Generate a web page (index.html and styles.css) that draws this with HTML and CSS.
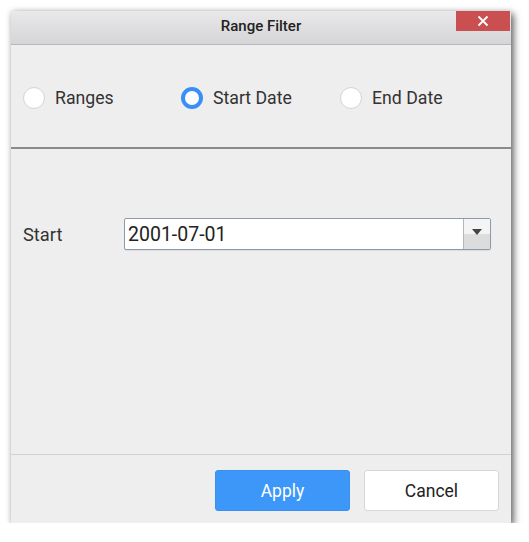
FILE: index.html
```html
<!DOCTYPE html>
<html>
<head>
<meta charset="utf-8">
<link rel="stylesheet" href="styles.css">
</head>
<body>
<div class="dialog">
  <div class="titlebar">
    <span class="title">Range Filter</span>
    <button class="close" aria-label="Close">
      <svg width="12" height="12" viewBox="0 0 12 12"><path d="M1.5 1.5 L10.5 10.5 M10.5 1.5 L1.5 10.5" stroke="#fff" stroke-width="1.8" fill="none"/></svg>
    </button>
  </div>
  <div class="radios">
    <label class="radio r1"><span class="dot"></span><span>Ranges</span></label>
    <label class="radio r2"><span class="dot checked"></span><span>Start Date</span></label>
    <label class="radio r3"><span class="dot"></span><span>End Date</span></label>
  </div>
  <div class="content">
    <div class="row">
      <span class="label">Start</span>
      <div class="select">
        <span class="value">2001-07-01</span>
        <span class="arrow"><svg width="10" height="6" viewBox="0 0 10 6"><path d="M0 0 H10 L5 6 Z" fill="#444"/></svg></span>
      </div>
    </div>
  </div>
  <div class="footer">
    <button class="btn apply">Apply</button>
    <button class="btn cancel">Cancel</button>
  </div>
</div>
</body>
</html>
```
FILE: styles.css
```css
html, body {
  margin: 0;
  padding: 0;
  background: #fff;
}
body {
  padding: 11px 0 0 11px;
  font-family: Roboto, "Liberation Sans", sans-serif;
  color: #333;
}
.dialog {
  width: 500px;
  height: 512px;
  background: #eeeeee;
  display: flex;
  flex-direction: column;
  box-shadow: 3px 3px 7px rgba(0,0,0,0.55), 0 0 6px rgba(0,0,0,0.15);
}
.titlebar {
  position: relative;
  height: 34px;
  box-sizing: border-box;
  border-bottom: 1px solid #b8b8b8;
  background: linear-gradient(#e9e8ea, #d5d4d6);
  display: flex;
  align-items: center;
  justify-content: center;
}
.title {
  font-size: 15px;
  font-weight: 500;
  color: #222;
  margin-top: -3px;
}
.close {
  position: absolute;
  top: 0;
  right: 1px;
  width: 54px;
  height: 20px;
  border: none;
  padding: 0;
  background: #c94f50;
  display: flex;
  align-items: center;
  justify-content: center;
}
.radios {
  height: 104px;
  box-sizing: border-box;
  border-bottom: 2px solid #8a8a8a;
  display: flex;
  align-items: center;
  padding-left: 12px;
  padding-top: 4px;
}
.radio {
  display: flex;
  align-items: center;
  font-size: 17.7px;
  color: #333;
}
.r1 { width: 158px; }
.r2 { width: 159px; }
.dot {
  width: 22px;
  height: 22px;
  box-sizing: border-box;
  border-radius: 50%;
  background: #fff;
  border: 1px solid #d4d4d4;
  margin-right: 10px;
}
.dot.checked {
  border: 4px solid #3a8ef6;
}
.content {
  flex: 1;
  border-bottom: 1px solid #d2d2d2;
  padding: 69px 0 0 12px;
}
.row {
  display: flex;
  align-items: center;
}
.label {
  width: 101px;
  font-size: 18.3px;
  color: #333;
}
.select {
  width: 367px;
  height: 32px;
  box-sizing: border-box;
  border: 1px solid #8d9aab;
  border-radius: 2px;
  background: #fff;
  display: flex;
  align-items: center;
  box-shadow: 0 1px 1px rgba(0,0,0,0.08);
}
.value {
  flex: 1;
  padding-left: 3px;
  font-size: 19.5px;
  color: #222;
}
.arrow {
  width: 27px;
  height: 100%;
  box-sizing: border-box;
  border-left: 1px solid #b3b7bd;
  background: linear-gradient(#f4f4f4 0%, #f4f4f4 48%, #dcdcdc 52%, #dcdcdc 100%);
  display: flex;
  align-items: center;
  justify-content: center;
  padding-bottom: 4px;
}
.footer {
  height: 68px;
  display: flex;
  align-items: flex-start;
  justify-content: flex-end;
  padding: 15px 12px 0 0;
  box-sizing: border-box;
  gap: 14px;
}
.btn {
  width: 135px;
  height: 41px;
  border-radius: 3px;
  font-family: Roboto, "Liberation Sans", sans-serif;
  font-size: 17.5px;
  padding: 0;
}
.apply {
  background: #3d97f8;
  border: 1px solid #3a8ff0;
  color: #fff;
}
.cancel {
  background: #fff;
  border: 1px solid #d6d6d6;
  color: #222;
}
```
